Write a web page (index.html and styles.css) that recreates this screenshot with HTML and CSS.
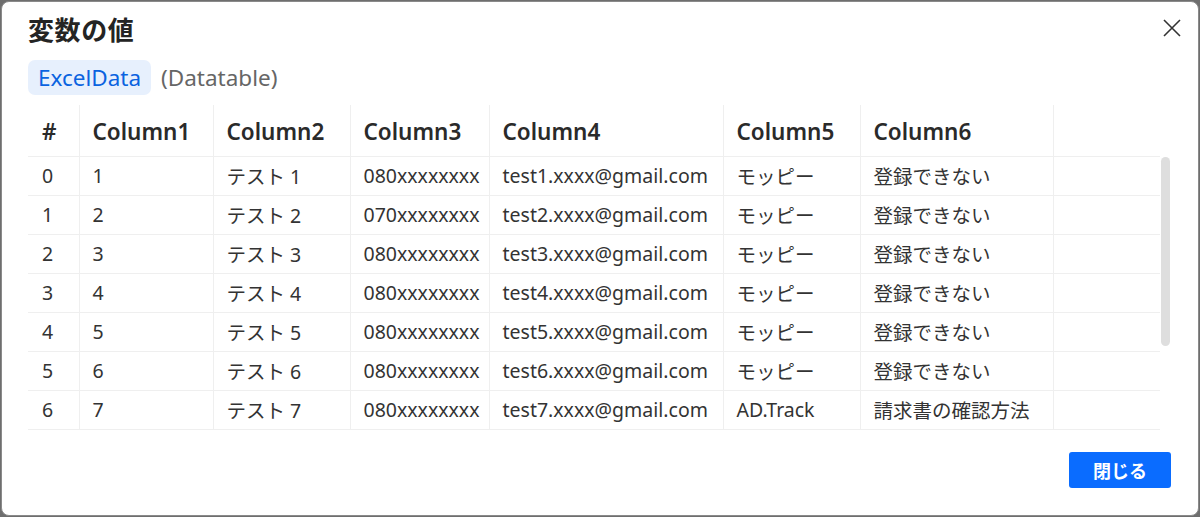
FILE: index.html
```html
<!DOCTYPE html>
<html lang="ja">
<head>
<meta charset="utf-8">
<link rel="stylesheet" href="styles.css">
</head>
<body>
<div class="dialog">
  <div class="head">
    <h1 class="title">変数の値</h1>
    <button class="close" aria-label="close">
      <svg width="18" height="18" viewBox="0 0 18 18"><path d="M1 1L17 17M17 1L1 17" stroke="#333" stroke-width="1.6" fill="none"/></svg>
    </button>
  </div>
  <div class="varline">
    <span class="chip">ExcelData</span>
    <span class="type">(Datatable)</span>
  </div>
  <div class="tablewrap">
    <table class="grid">
      <colgroup>
        <col class="c0"><col class="c1"><col class="c2"><col class="c3"><col class="c4"><col class="c5"><col class="c6"><col class="c7">
      </colgroup>
      <thead>
        <tr><th>#</th><th>Column1</th><th>Column2</th><th>Column3</th><th>Column4</th><th>Column5</th><th>Column6</th><th></th></tr>
      </thead>
      <tbody>
        <tr><td>0</td><td>1</td><td>テスト 1</td><td>080xxxxxxxx</td><td>test1.xxxx@gmail.com</td><td>モッピー</td><td>登録できない</td><td></td></tr>
        <tr><td>1</td><td>2</td><td>テスト 2</td><td>070xxxxxxxx</td><td>test2.xxxx@gmail.com</td><td>モッピー</td><td>登録できない</td><td></td></tr>
        <tr><td>2</td><td>3</td><td>テスト 3</td><td>080xxxxxxxx</td><td>test3.xxxx@gmail.com</td><td>モッピー</td><td>登録できない</td><td></td></tr>
        <tr><td>3</td><td>4</td><td>テスト 4</td><td>080xxxxxxxx</td><td>test4.xxxx@gmail.com</td><td>モッピー</td><td>登録できない</td><td></td></tr>
        <tr><td>4</td><td>5</td><td>テスト 5</td><td>080xxxxxxxx</td><td>test5.xxxx@gmail.com</td><td>モッピー</td><td>登録できない</td><td></td></tr>
        <tr><td>5</td><td>6</td><td>テスト 6</td><td>080xxxxxxxx</td><td>test6.xxxx@gmail.com</td><td>モッピー</td><td>登録できない</td><td></td></tr>
        <tr><td>6</td><td>7</td><td>テスト 7</td><td>080xxxxxxxx</td><td>test7.xxxx@gmail.com</td><td>AD.Track</td><td>請求書の確認方法</td><td></td></tr>
      </tbody>
    </table>
    <div class="scrollbar"></div>
  </div>
  <div class="foot">
    <button class="primary">閉じる</button>
  </div>
</div>
</body>
</html>
```
FILE: styles.css
```css
* { box-sizing: border-box; }
html, body { margin: 0; padding: 0; }
body {
  width: 1200px;
  height: 517px;
  background: #6e6e6e;
  padding: 1px;
  font-family: "Noto Sans", "Noto Sans CJK JP", sans-serif;
  color: #333;
}
.dialog {
  width: 1198px;
  height: 515px;
  background: #fff;
  border: 1px solid #8a8a8a;
  border-radius: 8px;
  display: flex;
  flex-direction: column;
  padding: 0 0 0 26px;
}
.head {
  display: flex;
  align-items: center;
  justify-content: space-between;
  height: 52px;
  padding-top: 0;
}
.title {
  margin: 0;
  font-size: 26px;
  font-weight: 700;
  color: #242424;
  font-family: "Noto Sans CJK JP", sans-serif;
  letter-spacing: 0.6px;
}
.close {
  border: 0;
  background: none;
  padding: 0;
  width: 18px;
  height: 18px;
  margin-right: 17px;
  display: flex;
}
.varline {
  display: flex;
  align-items: center;
  gap: 10px;
  height: 36px;
  margin-top: 5px;
}
.chip {
  background: #e7f0fd;
  color: #0a63e0;
  font-size: 22.5px;
  height: 35px;
  line-height: 35px;
  padding: 0 10px;
  border-radius: 7px;
}
.type {
  font-size: 22.5px;
  color: #666;
}
.tablewrap {
  position: relative;
  margin-top: 10px;
  width: 1144px;
}
.grid {
  border-collapse: collapse;
  table-layout: fixed;
  width: 1132px;
  font-size: 19.5px;
  color: #333;
}
.c0 { width: 51px; }
.c1 { width: 134px; }
.c2 { width: 137px; }
.c3 { width: 139px; }
.c4 { width: 234px; }
.c5 { width: 137px; }
.c6 { width: 193px; }
.c7 { width: 107px; }
.grid th, .grid td {
  text-align: left;
  padding: 0 0 0 13px;
  white-space: nowrap;
  overflow: hidden;
  border-left: 1px solid #efefef;
}
.grid th:first-child, .grid td:first-child { border-left: 0; padding-left: 14px; }
.grid th:last-child, .grid td:last-child { padding: 0; }
.grid th {
  height: 51px;
  font-size: 22.5px;
  font-weight: 600;
  color: #2a2a2a;
  border-bottom: 1px solid #efefef;
  padding-top: 3px;
}
.grid td {
  height: 39px;
  border-bottom: 1px solid #efefef;
  padding-top: 0;
}
.scrollbar {
  position: absolute;
  right: 2px;
  top: 52px;
  width: 9px;
  height: 189px;
  background: #dedede;
  border-radius: 5px;
}
.foot {
  margin-top: auto;
  display: flex;
  justify-content: flex-end;
  padding: 0 27px 27px 0;
}
.primary {
  width: 102px;
  height: 36px;
  background: #0a6cff;
  color: #fff;
  border: 0;
  border-radius: 3px;
  font-size: 18px;
  font-weight: 700;
  font-family: "Noto Sans CJK JP", sans-serif;
}
```
